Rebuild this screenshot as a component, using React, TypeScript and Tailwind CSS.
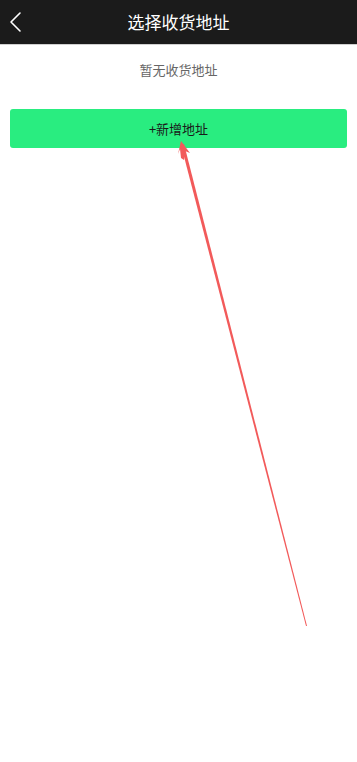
export default function App() {
  return (
    <main
      className="relative min-h-[762px] bg-white"
      style={{ fontFamily: '"Noto Sans CJK SC", "Noto Sans", sans-serif' }}
    >
      <header className="relative flex h-[45px] items-center justify-center border-b border-[#d0d0d0] bg-[#1b1b1b]">
        <button className="absolute left-[8px] top-[10px] p-0">
          <svg width="16" height="24" viewBox="0 0 16 24" fill="none">
            <path d="M12 3L3 12L12 21" stroke="#ffffff" strokeWidth="1.6" strokeLinecap="round" strokeLinejoin="round" />
          </svg>
        </button>
        <h1 className="text-[17px] text-white">选择收货地址</h1>
      </header>

      <p className="mt-[15px] text-center text-[13px] leading-[20px] text-[#666666]">暂无收货地址</p>

      <div className="mt-[29px] px-[10px]">
        <button className="flex h-[39px] w-full items-center justify-center rounded-[3px] bg-[#29ed80] text-[13px] text-[#1a1a1a]">
          +新增地址
        </button>
      </div>

      {/* annotation arrow */}
      <svg className="pointer-events-none absolute left-0 top-0" width="357" height="762" viewBox="0 0 357 762">
        <polygon points="181,145 184,144 307,626 306,626" fill="#f25a5a" />
        <polygon points="181,141 190,153 185,151 184,160 181,158 180,149 178,154" fill="#f25a5a" />
      </svg>
    </main>
  );
}
